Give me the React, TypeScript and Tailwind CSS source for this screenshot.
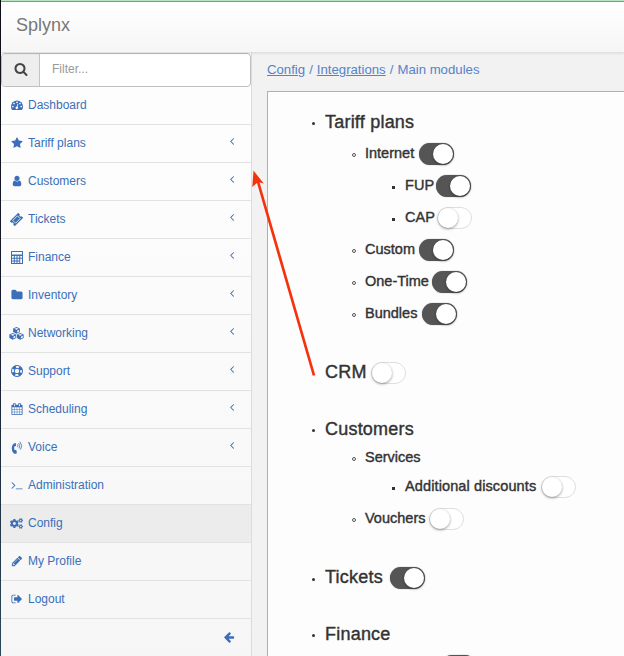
import React from 'react';
import { FaCogs } from 'react-icons/fa';

function Glyph({ d, size = 12 }: { d: string; size?: number }) {
  return (
    <svg width={size} height={size} viewBox="0 0 1792 1792" fill="currentColor" className="shrink-0">
      <path d={d} />
    </svg>
  );
}

const SEARCH =
  'M1216 832q0-185-131.5-316.5t-316.5-131.5-316.5 131.5-131.5 316.5 131.5 316.5 316.5 131.5 316.5-131.5 131.5-316.5zm512 832q0 52-38 90t-90 38q-54 0-90-38l-343-342q-179 124-399 124-143 0-273.5-55.5t-225-150-150-225-55.5-273.5 55.5-273.5 150-225 225-150 273.5-55.5 273.5 55.5 225 150 150 225 55.5 273.5q0 220-124 399l343 343q37 37 37 90z';
const STAR =
  'M1728 647q0 22-26 48l-363 354 86 500q1 7 1 20 0 21-10.5 35.5t-30.5 14.5q-19 0-40-12l-449-236-449 236q-22 12-40 12-21 0-31.5-14.5t-10.5-35.5q0-6 2-20l86-500-364-354q-25-27-25-48 0-37 56-46l502-73 225-455q19-41 49-41t49 41l225 455 502 73q56 9 56 46z';
const USER =
  'M1536 1399q0 109-62.5 187t-150.5 78h-854q-88 0-150.5-78t-62.5-187q0-85 8.5-160.5t31.5-152 58.5-131 94-89 134.5-34.5q131 128 313 128t313-128q76 0 134.5 34.5t94 89 58.5 131 31.5 152 8.5 160.5zm-256-887q0 159-112.5 271.5t-271.5 112.5-271.5-112.5-112.5-271.5 112.5-271.5 271.5-112.5 271.5 112.5 112.5 271.5z';
const FOLDER =
  'M1728 608v704q0 92-66 158t-158 66h-1216q-92 0-158-66t-66-158v-960q0-92 66-158t158-66h320q92 0 158 66t66 158v32h672q92 0 158 66t66 158z';
const CALENDAR =
  'M192 1664h288v-288h-288v288zm352 0h320v-288h-320v288zm-352-352h288v-320h-288v320zm352 0h320v-320h-320v320zm-352-384h288v-288h-288v288zm736 736h320v-288h-320v288zm-384-736h320v-288h-320v288zm768 736h288v-288h-288v288zm-384-352h320v-320h-320v320zm-352-864v-288q0-13-9.5-22.5t-22.5-9.5h-64q-13 0-22.5 9.5t-9.5 22.5v288q0 13 9.5 22.5t22.5 9.5h64q13 0 22.5-9.5t9.5-22.5zm736 864h288v-320h-288v320zm-384-384h320v-288h-320v288zm384 0h288v-288h-288v288zm32-480v-288q0-13-9.5-22.5t-22.5-9.5h-64q-13 0-22.5 9.5t-9.5 22.5v288q0 13 9.5 22.5t22.5 9.5h64q13 0 22.5-9.5t9.5-22.5zm384-64v1280q0 52-38 90t-90 38h-1408q-52 0-90-38t-38-90v-1280q0-52 38-90t90-38h128v-96q0-66 47-113t113-47h64q66 0 113 47t47 113v96h384v-96q0-66 47-113t113-47h64q66 0 113 47t47 113v96h128q52 0 90 38t38 90z';
const TERMINAL =
  'M649 983l-466 466q-10 10-23 10t-23-10l-50-50q-10-10-10-23t10-23l393-393-393-393q-10-10-10-23t10-23l50-50q10-10 23-10t23 10l466 466q10 10 10 23t-10 23zm1079 457v64q0 14-9 23t-23 9h-960q-14 0-23-9t-9-23v-64q0-14 9-23t23-9h960q14 0 23 9t9 23z';
const PENCIL =
  'M491 1536l91-91-235-235-91 91v107h128v128h107zm523-928q0-22-22-22-10 0-17 7l-542 542q-7 7-7 17 0 22 22 22 10 0 17-7l542-542q7-7 7-17zm-54-192l416 416-832 832h-416v-416zm683 96q0 53-37 90l-166 166-416-416 166-165q36-38 90-38 53 0 91 38l235 234q37 39 37 91z';
const SIGN_OUT =
  'M704 1440q0 4 1 20t.5 26.5-3 23.5-10 19.5-20.5 6.5h-320q-119 0-203.5-84.5t-84.5-203.5v-704q0-119 84.5-203.5t203.5-84.5h320q13 0 22.5 9.5t9.5 22.5q0 4 1 20t.5 26.5-3 23.5-10 19.5-20.5 6.5h-320q-66 0-113 47t-47 113v704q0 66 47 113t113 47h312l11.5 1 11.5 3 8 5.5 7 9 2 13.5zm928-544q0 26-19 45l-544 544q-19 19-45 19t-45-19-19-45v-288h-448q-26 0-45-19t-19-45v-384q0-26 19-45t45-19h448v-288q0-26 19-45t45-19 45 19l544 544q19 19 19 45z';
const ARROW_LEFT =
  'M1664 896v128q0 53-32.5 90.5t-84.5 37.5h-704l293 294q38 36 38 90t-38 90l-75 76q-37 37-90 37-52 0-91-37l-651-652q-37-37-37-90 0-52 37-91l651-650q38-38 91-38 52 0 90 38l75 74q38 38 38 91t-38 91l-293 293h704q52 0 84.5 37.5t32.5 90.5z';
const ANGLE_LEFT =
  'M1203 544q0 13-10 23l-393 393 393 393q10 10 10 23t-10 23l-50 50q-10 10-23 10t-23-10l-466-466q-10-10-10-23t10-23l466-466q10-10 23-10t23 10l50 50q10 10 10 23z';

function DashboardIcon() {
  return (
    <svg width="12" height="12" viewBox="0 0 24 24">
      <path fill="currentColor" d="M12 3a12 12 0 0 1 12 12q0 3.500-1.800 6.400-.4.600-1.200.600H3q-.8 0-1.200-.6Q0 18.500 0 15A12 12 0 0 1 12 3z" />
      <g fill="#fdfdfd">
        <circle cx="3.600" cy="15" r="1.700" />
        <circle cx="6.100" cy="9" r="1.700" />
        <circle cx="12" cy="6.600" r="1.700" />
        <circle cx="17.900" cy="9" r="1.700" />
        <circle cx="20.400" cy="15" r="1.700" />
        <path d="M13.300 9.500 14.700 9.900 13.200 15.500a2.600 2.600 0 1 1-1.600-.5z" />
      </g>
    </svg>
  );
}

function TicketIcon() {
  return (
    <svg width="13" height="13" viewBox="0 0 24 24">
      <g transform="rotate(-45 12 12)">
        <path fill="currentColor" d="M1 5.500h22v4.300a2.200 2.200 0 0 0 0 4.400v4.300H1v-4.300a2.200 2.200 0 0 0 0-4.400z" />
        <path fill="none" stroke="#fbfbfb" strokeWidth="1.400" d="M6 8.300h12v7.400H6z" />
      </g>
    </svg>
  );
}

function CalculatorIcon() {
  return (
    <svg width="12" height="13" viewBox="0 0 12 13">
      <path
        fill="currentColor"
        fillRule="evenodd"
        d="M.5 0h11q.5 0 .5.5v12q0 .5-.5.5H.5Q0 13 0 12.500V.5Q0 0 .5 0zM1 1v2.500h10V1zM1 5v1.700h1.800V5zM3.800 5v1.700h1.700V5zM6.500 5v1.700h1.700V5zM9.200 5v1.700H11V5zM1 7.700v1.700h1.800V7.700zM3.800 7.700v1.700h1.700V7.700zM6.500 7.700v1.700h1.700V7.700zM1 10.400V12h1.800v-1.600zM3.800 10.400V12h1.700v-1.600zM6.500 10.400V12h1.700v-1.600zM9.200 7.700V12H11V7.700z"
      />
    </svg>
  );
}

function CubesIcon() {
  const cubes = [
    [15, 0],
    [7.500, 12],
    [22.500, 12],
  ];
  return (
    <svg width="15" height="13" viewBox="0 0 30 26" className="shrink-0">
      {cubes.map(([x, y]) => (
        <g key={`${x}-${y}`} transform={`translate(${x} ${y})`}>
          <path fill="currentColor" d="M0 0 6.800 2.800V10L0 13.500-6.800 10V2.800z" />
          <path fill="#fbfbfb" d="M0 1.900 4.300 3.700 0 5.500-4.300 3.700zM1.300 7.300 5.200 5.600V9L1.300 11z" />
        </g>
      ))}
    </svg>
  );
}

function LifeRingIcon() {
  return (
    <svg width="12" height="12" viewBox="0 0 24 24" fill="none" stroke="currentColor">
      <circle cx="12" cy="12" r="11" strokeWidth="2" />
      <circle cx="12" cy="12" r="5.500" strokeWidth="2" />
      <circle cx="12" cy="12" r="8.500" strokeWidth="6" strokeDasharray="6.680" strokeDashoffset="-3.340" />
    </svg>
  );
}

function PhoneIcon() {
  return (
    <svg width="12" height="13" viewBox="0 0 12 13" fill="none" stroke="currentColor">
      <path
        fill="currentColor"
        stroke="none"
        d="M4.800 2.200 5.100 4.700Q5.100 5 4.800 5.100L3.300 5.500Q2.900 7.300 3.600 9L5.100 9.100Q5.400 9.200 5.500 9.500L5.800 12Q5.800 12.400 5.500 12.500 3.200 13.400 2 11.600 0 8.500 1.300 4.500 2.200 1.900 4.400 1.900 4.700 1.900 4.800 2.200z"
      />
      <path strokeWidth=".8" d="M6.300 3.400q1.200 1.200.3 2.800M7.600 2q2.200 2.600.4 5.500M9 .7q3.200 4 .5 8" />
    </svg>
  );
}

const menu: { label: string; icon: React.ReactNode; sub?: boolean; active?: boolean }[] = [
  { label: 'Dashboard', icon: <DashboardIcon /> },
  { label: 'Tariff plans', icon: <Glyph d={STAR} />, sub: true },
  { label: 'Customers', icon: <Glyph d={USER} />, sub: true },
  { label: 'Tickets', icon: <TicketIcon />, sub: true },
  { label: 'Finance', icon: <CalculatorIcon />, sub: true },
  { label: 'Inventory', icon: <Glyph d={FOLDER} />, sub: true },
  { label: 'Networking', icon: <CubesIcon />, sub: true },
  { label: 'Support', icon: <LifeRingIcon />, sub: true },
  { label: 'Scheduling', icon: <Glyph d={CALENDAR} />, sub: true },
  { label: 'Voice', icon: <PhoneIcon />, sub: true },
  { label: 'Administration', icon: <Glyph d={TERMINAL} /> },
  { label: 'Config', icon: <FaCogs size={13} />, active: true },
  { label: 'My Profile', icon: <Glyph d={PENCIL} /> },
  { label: 'Logout', icon: <Glyph d={SIGN_OUT} /> },
];

function Toggle({ on }: { on: boolean }) {
  return on ? (
    <span className="mt-0.5 flex h-[22px] w-[35px] shrink-0 justify-end rounded-full bg-[#555] p-px shadow-[0_0_1px_#666]">
      <span className="size-5 rounded-full bg-white shadow-[0_1px_3px_rgba(0,0,0,0.4)]" />
    </span>
  ) : (
    <span className="mt-0.5 flex h-[22px] w-[35px] shrink-0 rounded-full border border-[#dfdfdf] bg-white">
      <span className="size-5 rounded-full bg-white shadow-[0_1px_3px_rgba(0,0,0,0.4)]" />
    </span>
  );
}

type Item = { label: string; level: 1 | 2 | 3; width: string; on?: boolean; row?: string; bullet?: boolean };

const items: Item[] = [
  { label: 'Tariff plans', level: 1, width: 'w-24', row: 'h-[31px]' },
  { label: 'Internet', level: 2, width: 'w-[54px]', on: true },
  { label: 'FUP', level: 3, width: 'w-[31px]', on: true },
  { label: 'CAP', level: 3, width: 'w-8', on: false },
  { label: 'Custom', level: 2, width: 'w-[54px]', on: true },
  { label: 'One-Time', level: 2, width: 'w-[67px]', on: true },
  { label: 'Bundles', level: 2, width: 'w-[57px]', on: true },
  { label: 'CRM', level: 1, width: 'w-[46px]', on: false, row: 'h-8 mt-[27px]', bullet: false },
  { label: 'Customers', level: 1, width: 'w-24', row: 'h-[31px] mt-[25px]' },
  { label: 'Services', level: 2, width: 'w-16', row: 'h-[26px]' },
  { label: 'Additional discounts', level: 3, width: 'w-[136px]', on: false },
  { label: 'Vouchers', level: 2, width: 'w-16', on: false },
  { label: 'Tickets', level: 1, width: 'w-[65px]', on: true, row: 'h-8 mt-[27px]' },
  { label: 'Finance', level: 1, width: 'w-24', row: 'h-[31px] mt-[25px]' },
  { label: '', level: 2, width: 'w-[76px]', on: true, row: 'h-8', bullet: false },
];

const indent = { 1: 'pl-[44px]', 2: 'pl-[84px]', 3: 'pl-[124px]' };
const type = {
  1: 'text-[18px] tracking-[0.012em]',
  2: 'text-[14.5px] -mt-px',
  3: 'text-[14.5px] tracking-[0.008em] -mt-px',
};
const marker = {
  1: 'size-[3px] rounded-full bg-[#333]',
  2: 'size-1 rounded-full border border-[#555]',
  3: 'size-[3px] bg-[#333]',
};

function ModuleRow({ item }: { item: Item }) {
  return (
    <li className={`flex shrink-0 items-center ${item.row ?? 'h-8'} ${indent[item.level]}`}>
      <span className="mt-1 flex w-[13px] shrink-0">
        {item.bullet !== false && <span className={marker[item.level]} />}
      </span>
      <span
        className={`shrink-0 whitespace-nowrap leading-5 text-[#333] [-webkit-text-stroke:0.4px_#333] ${type[item.level]} ${item.width}`}
      >
        {item.label}
      </span>
      {item.on !== undefined && <Toggle on={item.on} />}
    </li>
  );
}

export default function App() {
  return (
    <div className="relative flex h-[656px] w-[624px] overflow-hidden bg-[#f2f2f2] font-['Liberation_Sans',Arial,sans-serif]">
      <div className="w-px shrink-0 bg-linear-to-b from-[#0d0f18] via-[#171c30] to-[#294a58]" />
      <div className="flex min-w-0 grow flex-col">
        <div className="h-0.5 shrink-0 border-b border-[#72a880] bg-[#b9e6c4]" />
        <header className="z-10 flex h-[50px] shrink-0 items-center bg-linear-to-b from-white to-[#f6f6f6] pl-[15px] text-[18px] text-[#777] shadow-[0_1px_3px_rgba(0,0,0,0.12)]">
          <span className="-mt-1">Splynx</span>
        </header>
        <div className="flex min-h-0 grow pt-px">
          <aside className="flex w-[251px] shrink-0 flex-col border-r border-[#dcdcdc] bg-linear-to-b from-[#fefefe] to-[#f6f6f6] text-[12px] text-[#3b6fb9]">
            <div className="flex h-[34px] shrink-0 overflow-hidden rounded border border-[#bfbfbf] bg-white">
              <div className="flex w-[38px] items-center justify-center border-r border-[#c4c4c4] bg-[#eee] pb-0.5 text-[#444]">
                <Glyph d={SEARCH} size={14} />
              </div>
              <span className="pl-3 leading-[31px] text-[#999]">Filter...</span>
            </div>
            {menu.map((m) => (
              <div
                key={m.label}
                className={`flex h-[38px] shrink-0 items-center border-b border-[#e2e2e2] pr-[13px] ${m.active ? 'bg-[#ececec]' : ''}`}
              >
                <span className="ml-[6px] flex w-[19px] shrink-0 items-center justify-center pb-px">{m.icon}</span>
                <span className="ml-0.5 -mt-0.5 grow">{m.label}</span>
                {m.sub && (
                  <span className="-mt-[5px]">
                    <Glyph d={ANGLE_LEFT} />
                  </span>
                )}
              </div>
            ))}
            <div className="flex grow items-center justify-end pr-4 pb-0.5">
              <Glyph d={ARROW_LEFT} />
            </div>
          </aside>
          <main className="flex min-w-0 grow flex-col pl-[15px]">
            <nav className="flex h-[38px] shrink-0 items-center gap-1 pb-1 text-[13.2px] text-[#5583ca]">
              <a className="underline">Config</a>
              <span>/</span>
              <a className="underline">Integrations</a>
              <span>/</span>
              <span>Main modules</span>
            </nav>
            <section className="min-h-0 grow overflow-hidden border-t border-l border-[#b0b0b0] bg-[#fdfdfd] pt-3.5">
              <ul className="flex flex-col">
                {items.map((item, i) => (
                  <ModuleRow key={i} item={item} />
                ))}
              </ul>
            </section>
          </main>
        </div>
      </div>
      <svg className="absolute top-0 left-0 z-20" width="624" height="656" fill="none">
        <path d="M314 375.500 257.500 180" stroke="#f4330d" strokeWidth="2.700" />
        <path d="M253.500 170.500 263.800 183.500 258 182 252.300 187z" fill="#f4330d" />
      </svg>
    </div>
  );
}
